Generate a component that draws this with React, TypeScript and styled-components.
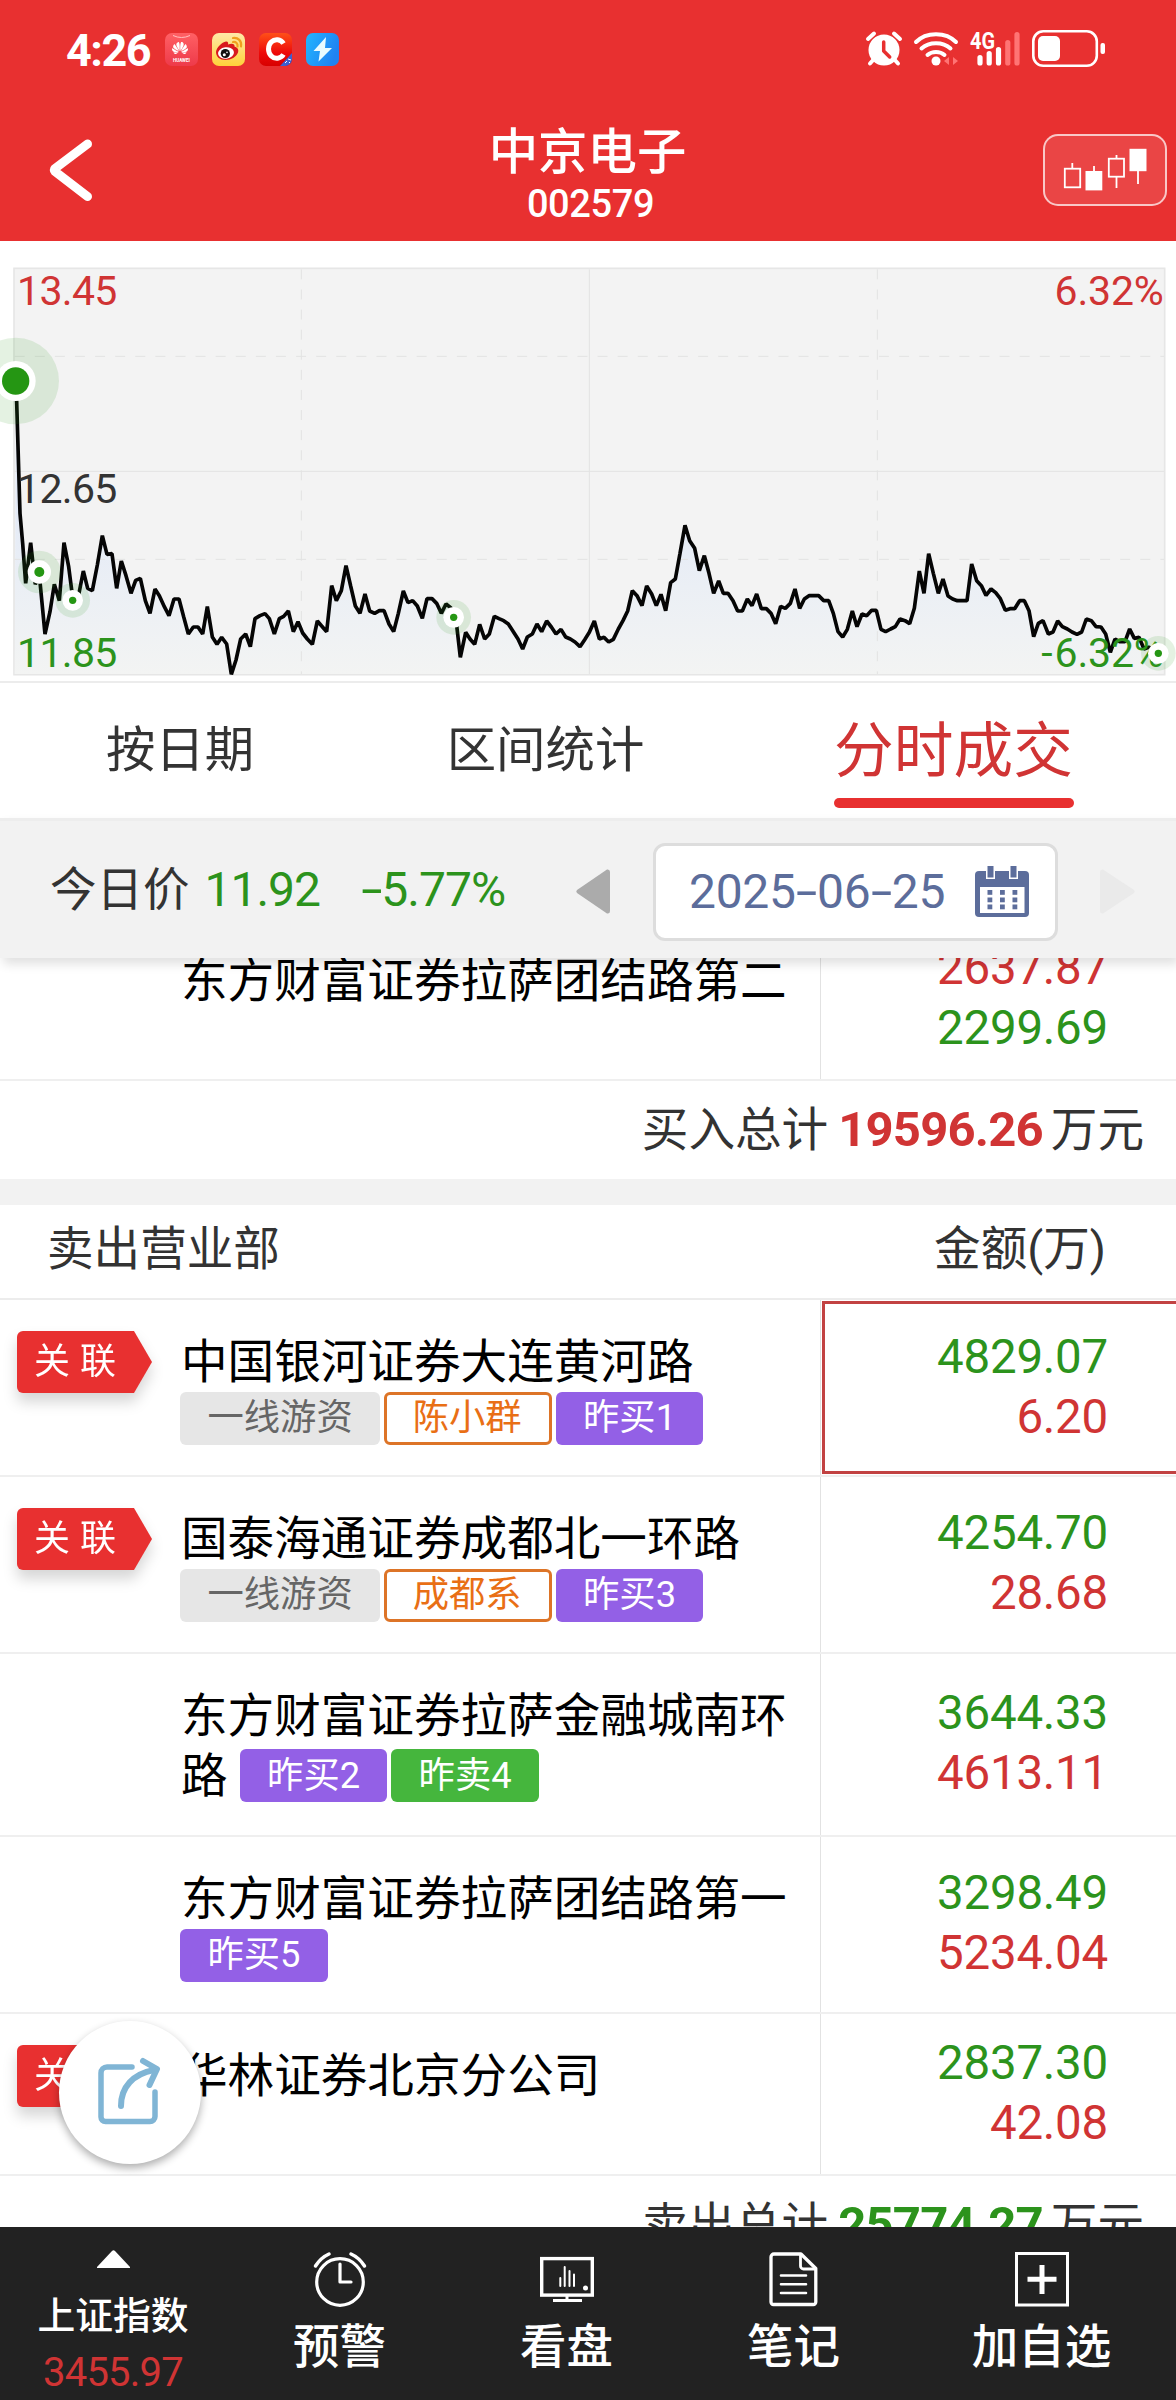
import React from "react";
import styled, { createGlobalStyle, css } from "styled-components";
import { SiHuawei } from "react-icons/si";

const RED = "#e83030";
const UP = "#d03434";
const DOWN = "#2c931c";
const TEXT = "#333333";
const LINE = "#ececec";

const GlobalStyle = createGlobalStyle`
  *, *::before, *::after { box-sizing: border-box; }
  body {
    margin: 0;
    background: #fff;
    color: ${TEXT};
    font-family: Roboto, "Noto Sans CJK SC", sans-serif;
  }
  svg { display: block; flex: none; overflow: visible; }
`;

const Screen = styled.div`
  width: 1176px;
  height: 2400px;
  display: flex;
  flex-direction: column;
  overflow: hidden;
  background: #fff;
`;

/* ---------- header ---------- */

const Header = styled.header`
  height: 241px;
  flex: none;
  background: ${RED};
  color: #fff;
`;

const StatusBar = styled.div`
  height: 98px;
  display: flex;
  align-items: center;
  padding: 0 71px 0 66px;
`;

const Clock = styled.span`
  width: 99px;
  font-size: 45px;
  line-height: 50px;
  font-weight: 700;
  letter-spacing: -1.5px;
  margin-top: 3px;
`;

const AppIcons = styled.div`
  display: flex;
  gap: 14px;
  margin-top: 1px;
  flex: 1;
`;

const NavBar = styled.div`
  height: 143px;
  display: grid;
  grid-template-columns: 180px 1fr 180px;
  padding-right: 9px;
`;

const BackButton = styled.button`
  border: 0;
  background: none;
  padding: 40px 0 0 48px;
  display: flex;
  align-items: flex-start;
`;

const TitleBlock = styled.div`
  display: flex;
  flex-direction: column;
  align-items: center;
  padding: 24px 0 0 8px;
`;

const Title = styled.h1`
  margin: 0;
  font-size: 49.4px;
  line-height: 60px;
  font-weight: 500;
`;

const Code = styled.span`
  margin-left: 6px;
  font-size: 38px;
  line-height: 44px;
  font-weight: 500;
  letter-spacing: -0.4px;
`;

const KlineButton = styled.button`
  width: 124px;
  height: 72px;
  margin: 36px 0 0 auto;
  padding: 0;
  border: 2px solid rgba(255, 255, 255, 0.7);
  border-radius: 15px;
  background: rgba(255, 255, 255, 0.1);
`;

/* ---------- chart ---------- */

const ChartPanel = styled.section`
  height: 442px;
  flex: none;
  border-bottom: 2px solid ${LINE};
`;

/* ---------- tabs ---------- */

const Tabs = styled.nav`
  height: 135px;
  flex: none;
  display: grid;
  grid-template-columns: 360px 371px 1fr;
`;

const Tab = styled.div<{ $active?: boolean }>`
  display: flex;
  flex-direction: column;
  align-items: center;
  padding-top: 32px;
  font-size: 49.4px;
  line-height: 70px;
  ${(p) =>
    p.$active &&
    css`
      color: ${UP};
      font-size: 59.7px;
      padding-top: 34px;
      &::after {
        content: "";
        width: 240px;
        height: 10px;
        margin-top: 11px;
        border-radius: 5px;
        background: ${RED};
      }
    `}
`;

/* ---------- price bar ---------- */

const PriceBar = styled.section`
  height: 140px;
  flex: none;
  position: relative;
  z-index: 2;
  display: flex;
  align-items: center;
  padding: 4px 41px 0 50px;
  background: #f2f2f2;
  border-top: 3px solid #ededed;
  box-shadow: 3px 6px 10px rgba(0, 0, 0, 0.12);
  font-size: 46.5px;
`;

const Quote = styled.div`
  width: 526px;
  display: flex;
  align-items: baseline;
  margin-top: -4px;
  line-height: 60px;
`;

const QuoteValue = styled.span<{ $gap: number }>`
  margin-left: ${(p) => p.$gap}px;
  color: ${DOWN};
  font-size: 48px;
  letter-spacing: -1px;
`;

const Dash = styled.span<{ $side: number }>`
  display: inline-block;
  margin: 0 ${(p) => p.$side}px;
  transform: scaleX(1.6);
`;

const DateBox = styled.div`
  width: 405px;
  height: 98px;
  margin: 0 42px 0 43px;
  padding: 0 26px 0 33px;
  display: flex;
  align-items: center;
  justify-content: space-between;
  border: 3px solid #dddddd;
  border-radius: 12px;
  background: #fff;
  color: #5c6d9b;
  font-size: 48px;
  letter-spacing: -0.3px;
  white-space: nowrap;
`;

/* ---------- list ---------- */

const List = styled.main`
  flex: 1;
  min-height: 0;
  margin-top: -39px;
  overflow: hidden;
`;

const Row = styled.div`
  min-height: 162px;
  display: grid;
  grid-template-columns: 821px 1fr;
  border-bottom: 2px solid #efefef;
`;

const NameCell = styled.div`
  display: grid;
  grid-template-columns: 181px 1fr;
  padding: 32px 0 30px;
  border-right: 1px solid #e2e2e2;
  color: #000;
  font-size: 46.6px;
  line-height: 60px;
`;

const Branch = styled.div`
  display: flex;
  flex-direction: column;
  white-space: nowrap;
`;

const TagLine = styled.div<{ $inline?: boolean }>`
  display: flex;
  align-items: center;
  gap: 4px;
  height: ${(p) => (p.$inline ? 59 : 54)}px;
  margin-top: ${(p) => (p.$inline ? 0 : -1)}px;
  margin-left: ${(p) => (p.$inline ? 0 : -1)}px;
`;

const Rest = styled.span`
  margin-right: 8px;
`;

const tones = {
  grey: css`
    background: #e6e6e6;
    color: #666;
  `,
  orange: css`
    border: 3px solid #dd7427;
    color: #e96f15;
    padding: 0 27px 0 26px;
  `,
  purple: css`
    background: #9360e6;
    color: #fff;
  `,
  green: css`
    background: #45b63d;
    color: #fff;
  `,
};

const Tag = styled.span<{ $tone: keyof typeof tones }>`
  height: 53px;
  display: flex;
  align-items: center;
  padding: 0 27px 0 27.5px;
  border-radius: 6px;
  font-size: 36.3px;
  line-height: 46px;
  ${(p) => tones[p.$tone]}
`;

const LinkedSlot = styled.div`
  margin-top: -1px;
  padding-left: 17px;
`;

const Linked = styled.div`
  filter: drop-shadow(0 9px 7px rgba(0, 0, 0, 0.16));
`;

const LinkedShape = styled.div`
  width: 135px;
  height: 62px;
  padding-left: 17px;
  display: flex;
  align-items: center;
  gap: 10px;
  border-radius: 6px 0 0 6px;
  clip-path: polygon(0 0, 117px 0, 100% 50%, 117px 100%, 0 100%);
  background: ${RED};
  color: #fff;
  font-size: 36px;
`;

const AmountCell = styled.div<{ $picked?: boolean }>`
  display: flex;
  flex-direction: column;
  justify-content: center;
  align-items: flex-end;
  padding: 0 68px 3px 0;
  font-size: 47.5px;
  line-height: 60px;
  letter-spacing: -0.25px;
  ${(p) =>
    p.$picked &&
    css`
      margin: 1px 0 1px 1px;
      padding-bottom: 2px;
      border: solid #c24242;
      border-width: 3px 0 3px 3px;
    `}
`;

const Amount = styled.span<{ $color: string }>`
  color: ${(p) => p.$color};
`;

const Total = styled.div`
  height: 98px;
  display: flex;
  align-items: center;
  justify-content: flex-end;
  padding-right: 32px;
  font-size: 46.6px;
  line-height: 60px;
`;

const TotalValue = styled.strong<{ $color: string }>`
  margin: 0 8px 0 10px;
  color: ${(p) => p.$color};
  font-size: 49px;
  letter-spacing: -0.8px;
`;

const Divider = styled.div`
  height: 26px;
  background: #f2f2f2;
`;

const ListHead = styled.div`
  height: 95px;
  display: flex;
  justify-content: space-between;
  padding: 14px 70px 0 47px;
  border-bottom: 2px solid ${LINE};
  font-size: 46.6px;
  line-height: 60px;
`;

const ShareButton = styled.button`
  position: absolute;
  left: 59px;
  top: 2021px;
  width: 142px;
  height: 143px;
  padding: 0 2px 3px 0;
  display: flex;
  align-items: center;
  justify-content: center;
  border: 0;
  border-radius: 50%;
  background: #fff;
  box-shadow: 0 4px 9px rgba(0, 0, 0, 0.32);
`;

/* ---------- bottom bar ---------- */

const BottomBar = styled.footer`
  height: 173px;
  flex: none;
  display: grid;
  grid-template-columns: 226px 227px 227px 227px 269px;
  background: #222;
  color: #fff;
`;

const IndexItem = styled.div`
  display: flex;
  flex-direction: column;
  align-items: center;
  padding-top: 23px;
  font-size: 37.8px;
  line-height: 50px;
  font-weight: 500;
`;

const IndexName = styled.span`
  margin-top: 23px;
`;

const IndexValue = styled.span`
  margin-top: 7px;
  color: ${UP};
  font-size: 40px;
  font-weight: 400;
  letter-spacing: -0.8px;
`;

const BottomItem = styled.div`
  display: flex;
  flex-direction: column;
  align-items: center;
  padding-top: 25px;
  font-size: 46.5px;
  line-height: 60px;
  font-weight: 500;
`;

const BottomLabel = styled.span`
  margin-top: 10px;
`;

/* ---------- drawings ---------- */

const HuaweiIcon = () => (
  <svg width="33" height="33" viewBox="0 0 33 33">
    <defs>
      <linearGradient id="hw" x1="0" y1="0" x2="0" y2="1">
        <stop offset="0" stopColor="#ff6064" />
        <stop offset="1" stopColor="#ee3a4a" />
      </linearGradient>
    </defs>
    <rect width="33" height="33" rx="7" fill="url(#hw)" />
    <path d="M8 2.500q8.500 4 17 0" fill="none" stroke="#ffc0c0" strokeWidth="1" />
    <SiHuawei x={7} y={7} width={19} height={19} color="#fff" />
    <text x="16.500" y="29" fontSize="4.500" fontWeight="700" textAnchor="middle" fill="#fff">HUAWEI</text>
  </svg>
);

const WeiboIcon = () => (
  <svg width="33" height="33" viewBox="0 0 33 33">
    <defs>
      <linearGradient id="wb" x1="0" y1="0" x2="0" y2="1">
        <stop offset="0" stopColor="#ffe9a8" />
        <stop offset="1" stopColor="#ffd23a" />
      </linearGradient>
    </defs>
    <rect width="33" height="33" rx="7" fill="url(#wb)" />
    <path d="M4 19c0-4 6-10 10-10.500 2-.2 2.500 1.500 2 3 3-1.300 7-1.500 6.500 2 3 1 4.500 3 3.500 6-1.500 4.500-7 7.500-12.500 7.500S4 24 4 19z" fill="#d9191e" />
    <ellipse cx="14" cy="20" rx="8" ry="5.800" fill="#fff" transform="rotate(-8 14 20)" />
    <circle cx="13.300" cy="20.500" r="4.600" fill="#111" />
    <circle cx="12.300" cy="21.700" r="1.500" fill="#fff" />
    <circle cx="15" cy="19.400" r="0.800" fill="#fff" />
    <path d="M21 5c5-.8 9 3 8 8.500M21 9c3-.4 5 1.500 4.500 4.500" fill="none" stroke="#f0a01e" strokeWidth="2.200" strokeLinecap="round" />
  </svg>
);

const CIcon = () => (
  <svg width="33" height="33" viewBox="0 0 33 33">
    <defs>
      <linearGradient id="cc" x1="0" y1="0" x2="0" y2="1">
        <stop offset="0" stopColor="#ff5018" />
        <stop offset="0.6" stopColor="#ee0a0a" />
        <stop offset="1" stopColor="#d80000" />
      </linearGradient>
      <clipPath id="ccClip">
        <rect width="33" height="33" rx="7" />
      </clipPath>
    </defs>
    <g clipPath="url(#ccClip)">
      <rect width="33" height="33" fill="url(#cc)" />
      <path d="M21 33L33 20V33z" fill="#3d5fd0" />
      <path d="M26 30l2-2M29 26l3 1M30 29l1 1" stroke="#fff" strokeWidth="1" />
    </g>
    <path d="M24.500 10.500A8.300 9.300 0 1 0 24.500 21.500" fill="none" stroke="#fff" strokeWidth="5" />
  </svg>
);

const BoltIcon = () => (
  <svg width="33" height="33" viewBox="0 0 33 33">
    <defs>
      <linearGradient id="bo" x1="0" y1="0" x2="1" y2="0.400">
        <stop offset="0" stopColor="#22b6ff" />
        <stop offset="1" stopColor="#1f82f2" />
      </linearGradient>
    </defs>
    <rect width="33" height="33" rx="7" fill="url(#bo)" />
    <path d="M20 4L7.500 18h6.500L12.500 28.500 26 15h-7z" fill="#e9fbff" />
  </svg>
);

const StatusIcons = () => (
  <svg width="239" height="38" viewBox="866 31 239 38" fill="none" stroke="#fff" strokeLinecap="round">
    <circle cx="884" cy="51" r="15.500" fill="#fff" stroke="none" />
    <path d="M868 40l6-5.500M900 40l-6-5.500" strokeWidth="4" />
    <path d="M874 60l-4 4.500M894 60l4 4.500" strokeWidth="4" />
    <path d="M883.700 43v9l6 6" stroke={RED} strokeWidth="3.500" strokeLinejoin="round" />
    <path d="M916 43c10-10.500 30-10.500 40 0" strokeWidth="4" />
    <path d="M921.500 49.500c7.500-7 21.500-7 29 0" strokeWidth="4" />
    <path d="M927.500 56c4.500-4 12.500-4 17 0" strokeWidth="4" />
    <circle cx="936" cy="62" r="4.500" fill="#fff" stroke="none" />
    <path d="M949 58v8l-5-4zM953 58v8l5-4z" fill="#ff7474" stroke="none" />
    <text x="970" y="49.500" fontSize="23.500" fontWeight="700" fill="#fff" stroke="none" textLength="25" lengthAdjust="spacingAndGlyphs">4G</text>
    <g strokeWidth="5.200">
      <path d="M980 58.500v5.500M989.200 54.500v9.500M998.500 50.500v13.500" />
      <path d="M1007.800 43.500v20.500M1017 35.500v28.500" stroke="#ff7474" />
    </g>
    <rect x="1033.300" y="32.300" width="63.500" height="34.500" rx="10" strokeWidth="2.600" />
    <rect x="1038" y="37" width="22" height="25" rx="5" fill="#fff" stroke="none" />
    <rect x="1100.500" y="44" width="4.500" height="11" rx="2" fill="#fff" stroke="none" />
  </svg>
);

const Candles = () => (
  <svg width="120" height="68" viewBox="1045 136 120 68" fill="none" stroke="#fff" strokeWidth="1.800">
    <path d="M1072.300 163v5M1094 166v6M1116.500 155v3M1116.500 177v11M1138 170v14" />
    <rect x="1064.800" y="168.700" width="15.400" height="18.600" />
    <rect x="1086.400" y="171.900" width="15" height="17.600" fill="#fff" />
    <rect x="1108.800" y="158.700" width="15.200" height="18" />
    <rect x="1130.400" y="149.700" width="15.200" height="20.600" fill="#fff" />
  </svg>
);

// Intraday price trace; each session part starts at its own x origin.
const trace: { from: number; points: number[][] }[] = [
  {
    from: 0,
    points: [
      [48, 400], [50, 455], [60, 790], [68, 880], [77, 1000], [92, 878], [106, 1003], [118, 975], [135, 1152],
      [150, 1085], [163, 1003], [178, 1052], [192, 878], [206, 950], [219, 1051], [236, 1035], [250, 963], [263, 1015],
      [277, 1022], [292, 945], [307, 857], [321, 913], [336, 911], [350, 1015], [364, 933], [378, 977], [393, 1030],
      [407, 991], [421, 985], [436, 1052], [450, 1090], [465, 1017], [478, 1037], [493, 1070], [507, 1097],
      [522, 1047], [537, 1047], [551, 1100], [565, 1152], [580, 1131], [594, 1131], [608, 1152], [622, 1070],
      [637, 1161], [651, 1183], [665, 1162], [680, 1182], [694, 1273], [708, 1230], [722, 1167], [737, 1152],
      [751, 1190], [765, 1106], [780, 1097], [795, 1091], [808, 1106], [823, 1152], [838, 1106], [851, 1099],
      [865, 1083], [880, 1145], [894, 1115], [908, 1149], [922, 1167], [937, 1183], [952, 1113], [965, 1128],
      [980, 1145], [995, 1007], [1009, 1052], [1024, 1022], [1038, 947], [1052, 1008], [1066, 1068], [1080, 1090],
      [1095, 1032], [1109, 1083], [1124, 1090], [1138, 1082], [1152, 1082], [1167, 1122],
    ],
  },
  {
    from: 1170,
    points: [
      [11, 1145], [25, 1090], [40, 1023], [54, 1058], [68, 1052], [82, 1068], [97, 1105], [111, 1046], [126, 1046],
      [140, 1060], [154, 1090], [168, 1062], [182, 1073], [197, 1100], [211, 1222], [227, 1147], [240, 1167],
      [254, 1183], [269, 1123], [284, 1167], [298, 1152], [313, 1099], [327, 1106], [341, 1112], [355, 1122],
      [370, 1145], [384, 1167], [398, 1197], [412, 1161], [427, 1152], [441, 1122], [455, 1145], [470, 1113],
      [484, 1131], [498, 1152], [513, 1138], [527, 1161], [541, 1167], [555, 1176], [570, 1190], [584, 1169],
      [598, 1147], [613, 1113], [628, 1167], [642, 1162], [656, 1176], [670, 1168], [685, 1137], [699, 1112],
      [713, 1083], [727, 1022], [741, 1037], [756, 1067], [770, 1008], [785, 1032], [799, 1067], [813, 1033],
      [827, 1082], [842, 998], [856, 987], [870, 910], [885, 826], [899, 872], [914, 895], [928, 962], [943, 917],
      [957, 970], [971, 1030], [986, 993], [1000, 1030], [1014, 1030], [1029, 1052], [1043, 1083], [1057, 1083],
      [1072, 1047], [1086, 1067], [1100, 1032], [1114, 1076], [1129, 1076], [1143, 1090], [1157, 1121],
    ],
  },
  {
    from: 2328,
    points: [
      [14, 1069], [28, 1075], [43, 1060], [57, 1017], [71, 1075], [85, 1047], [99, 1037], [128, 1037], [143, 1052],
      [158, 1052], [172, 1090], [186, 1145], [200, 1161], [214, 1138], [229, 1083], [243, 1130], [258, 1092],
      [272, 1097], [287, 1081], [301, 1081], [315, 1138], [329, 1145], [344, 1137], [358, 1130], [372, 1107],
      [387, 1112], [401, 1121], [415, 1075], [430, 963], [444, 1030], [458, 911], [472, 970], [487, 1030],
      [501, 987], [516, 1038], [530, 1047], [544, 1052], [573, 1052], [587, 942], [602, 992], [616, 1007],
      [630, 1036], [645, 1017], [659, 1028], [673, 1046], [688, 1081], [702, 1076], [716, 1076], [731, 1052],
      [745, 1052], [759, 1082], [773, 1160], [787, 1120], [801, 1112], [817, 1152], [831, 1146], [845, 1113],
      [859, 1130], [874, 1137], [888, 1146], [903, 1153], [917, 1146], [931, 1107], [946, 1112], [960, 1130],
      [975, 1131], [989, 1152], [1003, 1207], [1017, 1167], [1031, 1175], [1047, 1175], [1061, 1137], [1075, 1165],
      [1089, 1162], [1104, 1197], [1118, 1192], [1132, 1197], [1147, 1210],
    ],
  },
];

const line = trace
  .flatMap((part) => part.points.map(([x, y]) => `${part.from + x},${y}`))
  .join(" ");

const markers = [
  { x: 47, y: 393, halo: 130, ring: 60, dot: 41 },
  { x: 118, y: 966, halo: 64, ring: 35, dot: 15 },
  { x: 218, y: 1051, halo: 52, ring: 31, dot: 11 },
  { x: 1361, y: 1102, halo: 52, ring: 31, dot: 11 },
  { x: 3475, y: 1210, halo: 52, ring: 31, dot: 11 },
];

const Chart = () => (
  <svg width="1176" height="440" viewBox="0 -27 3528 1320">
    <defs>
      <linearGradient id="area" gradientUnits="userSpaceOnUse" x1="0" y1="750" x2="0" y2="1274">
        <stop offset="0" stopColor="#e3eaf7" />
        <stop offset="1" stopColor="#f3f4f3" />
      </linearGradient>
    </defs>
    <rect x="42" y="55" width="3452" height="1219" fill="#f3f3f3" stroke="#e6e6e6" strokeWidth="5" />
    <polygon points={`44,1272 ${line} 3475,1272`} fill="url(#area)" />
    <g stroke="#e2e3e2" strokeWidth="3">
      <path d="M44 664H3492M1768 58V1272" />
      <path d="M44 319H3492M44 928H3492M904 58V1272M2632 58V1272" strokeDasharray="30 30.300" />
    </g>
    <polyline points={line} fill="none" stroke="#050505" strokeWidth="11" strokeLinejoin="bevel" />
    <g fontSize="123" letterSpacing="-2">
      <text x="51" y="164" fill={UP}>13.45</text>
      <text x="51" y="760" fill={TEXT}>12.65</text>
      <text x="51" y="1250" fill={DOWN}>11.85</text>
    </g>
    <g fontSize="123" letterSpacing="-0.5" textAnchor="end">
      <text x="3491" y="164" fill={UP}>6.32%</text>
      <text x="3491" y="1250" fill={DOWN}>
        <tspan letterSpacing="6">-</tspan>6.32%
      </text>
    </g>
    {markers.map((m) => (
      <g key={m.x}>
        <circle cx={m.x} cy={m.y} r={m.halo} fill="#2c9a1c" fillOpacity="0.13" />
        <circle cx={m.x} cy={m.y} r={m.ring} fill="#fff" />
        <circle cx={m.x} cy={m.y} r={m.dot} fill="#259613" />
      </g>
    ))}
  </svg>
);

const CalendarIcon = () => (
  <svg width="54" height="52" viewBox="0 0 54 52">
    <path d="M4 5h46a4 4 0 0 1 4 4v38a4 4 0 0 1-4 4H4a4 4 0 0 1-4-4V9a4 4 0 0 1 4-4z" fill="#5c6d9b" />
    <rect x="5" y="21" width="44.500" height="26" fill="#fff" />
    <path d="M11 0h9v13h-9zM34 0h9v13h-9z" fill="#fff" />
    <path d="M12.500 0h6v11.500h-6zM35.500 0h6v11.500h-6z" fill="#5c6d9b" />
    <g fill="#5c6d9b">
      {[24, 31.5, 38.5].map((y) =>
        [12.5, 25, 37.5].map((x) => <rect key={`${x}-${y}`} x={x} y={y} width="4.800" height="4.800" />)
      )}
    </g>
  </svg>
);

const ShareIcon = () => (
  <svg width="64" height="68" viewBox="0 0 64 68" fill="none" stroke="#80b5d5" strokeLinecap="round" strokeLinejoin="round">
    <path d="M35 10H10a6 6 0 0 0-6 6v44a4.500 4.500 0 0 0 4.500 4.500H53a5 5 0 0 0 5-5V35" strokeWidth="5.500" />
    <path d="M24 49C24 30 36 17 57 13" strokeWidth="6" />
    <path d="M46 4l14 8-7.500 16" strokeWidth="6" />
  </svg>
);

const AlarmIcon = () => (
  <svg width="54" height="55" viewBox="0 0 54 55" fill="none" stroke="#fff" strokeWidth="3.200" strokeLinecap="round">
    <circle cx="27" cy="30" r="23.300" />
    <path d="M27 12v18h11" strokeLinejoin="round" />
    <path d="M2.500 14Q8 5.500 16 2M51.500 14Q46 5.500 38 2" strokeWidth="3.500" />
  </svg>
);

const MonitorIcon = () => (
  <svg width="54" height="55" viewBox="0 0 54 55" fill="none" stroke="#fff">
    <rect x="1.700" y="6.600" width="50.600" height="36.500" strokeWidth="3.400" />
    <path d="M27 44v3M13 48.500h29" strokeWidth="3" />
    <path d="M20.300 26v8M24.700 15v19M29.500 19v15M34 22.500v11.500" strokeWidth="2" strokeLinecap="round" />
    <circle cx="45.500" cy="36" r="2.500" fill="#fff" stroke="none" />
  </svg>
);

const NoteIcon = () => (
  <svg width="49" height="55" viewBox="0 0 49 55" fill="none" stroke="#fff" strokeWidth="3.300" strokeLinejoin="round">
    <path d="M5 2h27l14.800 14.500V50a2.500 2.500 0 0 1-2.500 2.500H4.500A2.500 2.500 0 0 1 2 50V5a3 3 0 0 1 3-3z" />
    <path d="M31.500 2.500V14a3 3 0 0 0 3 3H46" strokeWidth="2.800" />
    <path d="M12 23.500h25M12 32.300h25M12 41h25" strokeWidth="2.600" strokeLinecap="round" />
  </svg>
);

const PlusIcon = () => (
  <svg width="54" height="55" viewBox="0 0 54 55" fill="none" stroke="#fff">
    <rect x="1.500" y="1.500" width="51" height="51.500" strokeWidth="3" />
    <path d="M27 13v29M12.500 27.300h29" strokeWidth="5" />
  </svg>
);

/* ---------- data ---------- */

type Seller = {
  linked?: boolean;
  picked?: boolean;
  name: string;
  rest?: string;
  tags: [keyof typeof tones, string][];
  amounts: [string, string];
};

const sellers: Seller[] = [
  {
    linked: true,
    picked: true,
    name: "中国银河证券大连黄河路",
    tags: [["grey", "一线游资"], ["orange", "陈小群"], ["purple", "昨买1"]],
    amounts: ["4829.07", "6.20"],
  },
  {
    linked: true,
    name: "国泰海通证券成都北一环路",
    tags: [["grey", "一线游资"], ["orange", "成都系"], ["purple", "昨买3"]],
    amounts: ["4254.70", "28.68"],
  },
  {
    name: "东方财富证券拉萨金融城南环",
    rest: "路",
    tags: [["purple", "昨买2"], ["green", "昨卖4"]],
    amounts: ["3644.33", "4613.11"],
  },
  {
    name: "东方财富证券拉萨团结路第一",
    tags: [["purple", "昨买5"]],
    amounts: ["3298.49", "5234.04"],
  },
  { linked: true, name: "华林证券北京分公司", tags: [], amounts: ["2837.30", "42.08"] },
];

const BranchRow = ({ item, colors = [DOWN, UP] }: { item: Seller; colors?: string[] }) => (
  <Row>
    <NameCell>
      <LinkedSlot>
        {item.linked && (
          <Linked>
            <LinkedShape>
              <span>关</span>
              <span>联</span>
            </LinkedShape>
          </Linked>
        )}
      </LinkedSlot>
      <Branch>
        <span>{item.name}</span>
        {item.tags.length > 0 && (
          <TagLine $inline={!!item.rest}>
            {item.rest && <Rest>{item.rest}</Rest>}
            {item.tags.map(([tone, label]) => (
              <Tag key={label} $tone={tone}>
                {label}
              </Tag>
            ))}
          </TagLine>
        )}
      </Branch>
    </NameCell>
    <AmountCell $picked={item.picked}>
      <Amount $color={colors[0]}>{item.amounts[0]}</Amount>
      <Amount $color={colors[1]}>{item.amounts[1]}</Amount>
    </AmountCell>
  </Row>
);

export default function App() {
  return (
    <>
      <GlobalStyle />
      <Screen>
        <Header>
          <StatusBar>
            <Clock>4:26</Clock>
            <AppIcons>
              <HuaweiIcon />
              <WeiboIcon />
              <CIcon />
              <BoltIcon />
            </AppIcons>
            <StatusIcons />
          </StatusBar>
          <NavBar>
            <BackButton aria-label="返回">
              <svg width="46" height="64" viewBox="0 0 46 64" fill="none" stroke="#fff" strokeWidth="9" strokeLinecap="round" strokeLinejoin="round">
                <path d="M39.500 6L7 30.500Q5.500 32 7 33.500L39.500 58.500" />
              </svg>
            </BackButton>
            <TitleBlock>
              <Title>中京电子</Title>
              <Code>002579</Code>
            </TitleBlock>
            <KlineButton aria-label="K线">
              <Candles />
            </KlineButton>
          </NavBar>
        </Header>

        <ChartPanel>
          <Chart />
        </ChartPanel>

        <Tabs>
          <Tab>按日期</Tab>
          <Tab>区间统计</Tab>
          <Tab $active>分时成交</Tab>
        </Tabs>

        <PriceBar>
          <Quote>
            今日价
            <QuoteValue $gap={15}>11.92</QuoteValue>
            <QuoteValue $gap={41}>
              <Dash $side={4}>-</Dash>5.77%
            </QuoteValue>
          </Quote>
          <svg width="34" height="45" viewBox="0 0 34 45" fill="#ababab">
            <path d="M31 0.500Q34 0 34 3V42Q34 45 31 44.500L1 24Q-0.500 22.500 1 21z" />
          </svg>
          <DateBox>
            <span>
              2025<Dash $side={4.2}>-</Dash>06<Dash $side={4.2}>-</Dash>25
            </span>
            <CalendarIcon />
          </DateBox>
          <svg width="35" height="45" viewBox="0 0 35 45" fill="#eaeaea">
            <path d="M3 0.500Q0 0 0 3V42Q0 45 3 44.500L34 24Q35.500 22.500 34 21z" />
          </svg>
        </PriceBar>

        <List>
          <BranchRow
            item={{ name: "东方财富证券拉萨团结路第二", tags: [], amounts: ["2637.87", "2299.69"] }}
            colors={[UP, DOWN]}
          />
          <Total>
            买入总计<TotalValue $color={UP}>19596.26</TotalValue>万元
          </Total>
          <Divider />
          <ListHead>
            <span>卖出营业部</span>
            <span>金额(万)</span>
          </ListHead>
          {sellers.map((item) => (
            <BranchRow key={item.name} item={item} />
          ))}
          <Total>
            卖出总计<TotalValue $color={DOWN}>25774.27</TotalValue>万元
          </Total>
        </List>

        <BottomBar>
          <IndexItem>
            <svg width="33" height="18" viewBox="0 0 33 18" fill="#fff">
              <path d="M15 1q1.500-1.500 3 0L33 17v1H0v-1z" />
            </svg>
            <IndexName>上证指数</IndexName>
            <IndexValue>3455.97</IndexValue>
          </IndexItem>
          <BottomItem>
            <AlarmIcon />
            <BottomLabel>预警</BottomLabel>
          </BottomItem>
          <BottomItem>
            <MonitorIcon />
            <BottomLabel>看盘</BottomLabel>
          </BottomItem>
          <BottomItem>
            <NoteIcon />
            <BottomLabel>笔记</BottomLabel>
          </BottomItem>
          <BottomItem>
            <PlusIcon />
            <BottomLabel>加自选</BottomLabel>
          </BottomItem>
        </BottomBar>

        <ShareButton aria-label="分享">
          <ShareIcon />
        </ShareButton>
      </Screen>
    </>
  );
}
